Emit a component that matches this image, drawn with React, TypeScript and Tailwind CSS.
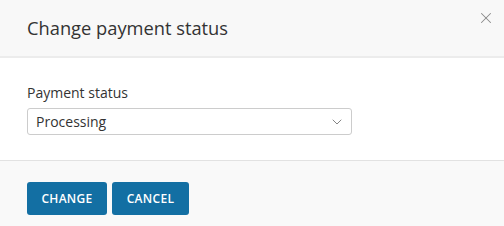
import { X, ChevronDown } from 'lucide-react';

const font = { fontFamily: '"Open Sans", "Noto Sans", sans-serif' };

export default function App() {
  return (
    <div className="w-[504px] h-[226px] bg-white text-[#333] flex flex-col" style={font}>
      <div className="h-[58px] flex-none bg-[#f8f8f8] border-b-2 border-[#ececec] flex items-center justify-between pl-[27px] pr-[9px]">
        <h2 className="text-[18.3px] leading-none">Change payment status</h2>
        <button className="self-start mt-[9px] text-[#8a8a8a]">
          <X size={18} strokeWidth={1.4} />
        </button>
      </div>
      <div className="h-[102px] flex-none pl-[27px] pt-[26px]">
        <label className="block text-[14px] leading-[18px] mb-[6px]">Payment status</label>
        <div className="w-[325px] h-[27px] border border-[#ccc] rounded-[3px] flex items-center justify-between pl-[8px] pr-[6px] text-[14px]">
          <span>Processing</span>
          <ChevronDown size={16} strokeWidth={1.2} className="text-[#666]" />
        </div>
      </div>
      <div className="flex-1 bg-[#f9f9f9] border-t border-[#e2e2e2] pl-[27px] pt-[21px] flex gap-[5px] items-start">
        <button className="h-[33px] w-[80px] rounded-[3px] bg-[#136fa3] text-white text-[12px] font-semibold tracking-wide">
          CHANGE
        </button>
        <button className="h-[33px] w-[77px] rounded-[3px] bg-[#136fa3] text-white text-[12px] font-semibold tracking-wide">
          CANCEL
        </button>
      </div>
    </div>
  );
}
